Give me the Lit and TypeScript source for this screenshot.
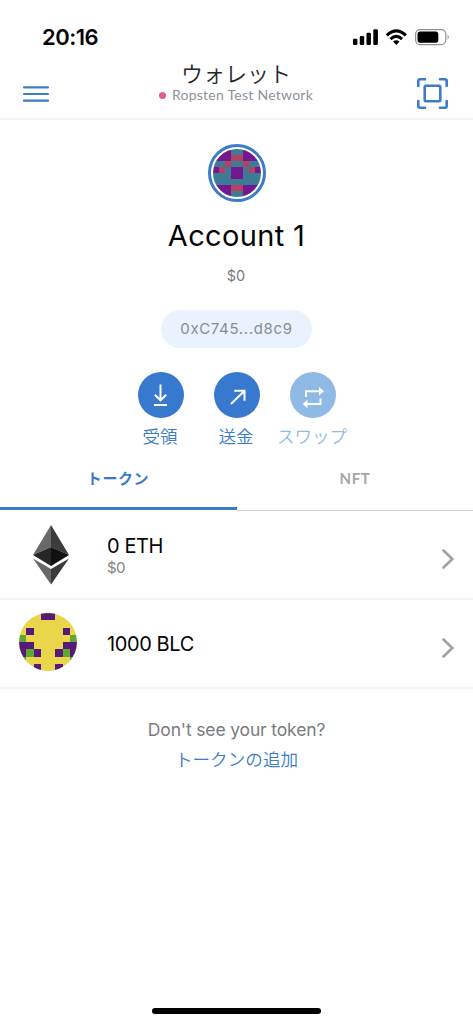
import { LitElement, html, css, svg } from "lit";
import { customElement, property } from "lit/decorators.js";

@customElement("block-avatar")
class BlockAvatar extends LitElement {
  @property({ type: Array }) rows: string[] = [];
  @property({ type: Object }) palette: Record<string, string> = {};
  static styles = css`
    :host { display: block; border-radius: 50%; overflow: hidden; }
    .grid { display: block; width: 100%; height: 100%; }
  `;
  render() {
    return html`<svg class="grid" viewBox="0 0 8 8" shape-rendering="crispEdges">
      ${this.rows.map((row, y) =>
        [...row].map((c, x) => svg`<rect x=${x} y=${y} width="1.02" height="1.02" fill=${this.palette[c]}></rect>`)
      )}
    </svg>`;
  }
}

@customElement("app-root")
class AppRoot extends LitElement {
  static styles = css`
    * { box-sizing: border-box; }
    :host {
      display: flex; flex-direction: column; width: 473px; height: 1024px; overflow: hidden;
      background: #fff; color: #050505;
      font-family: Inter, "Noto Sans CJK JP", sans-serif;
      -webkit-font-smoothing: antialiased;
    }
    svg { display: block; }
    .status { height: 58px; flex: none; display: flex; justify-content: space-between; padding: 25px 23px 0 42px; }
    .clock { font-size: 22px; line-height: 25px; font-weight: 600; letter-spacing: -0.5px; white-space: nowrap; }
    .indicators { display: flex; height: 24px; }
    .header { height: 62px; flex: none; display: flex; justify-content: space-between; border-bottom: 2px solid #f4f5f6; padding: 0 24px 0 22px; }
    .menu { margin-top: 27px; }
    .scan { margin-top: 19px; }
    .heading { display: flex; flex-direction: column; align-items: center; padding-top: 2px; margin-left: 6px; }
    .title { font-size: 22px; line-height: 25px; color: #24272a; font-family: "Noto Sans CJK JP", sans-serif; white-space: nowrap; font-weight: 350; }
    .network { margin-top: 1px; display: flex; align-items: center; gap: 6px; font: 14px/18px Lato, sans-serif; letter-spacing: 0.26px; color: #8b929b; white-space: nowrap; }
    .dot { width: 7px; height: 7px; border-radius: 50%; background: #e05c91; }
    .account { height: 329px; flex: none; display: flex; flex-direction: column; align-items: center; padding-top: 24px; }
    .ring { width: 58px; height: 58px; border: 3px solid #3a7bca; border-radius: 50%; padding: 2px; }
    .name { margin-top: 15px; font-size: 29px; line-height: 38px; letter-spacing: 0.35px; white-space: nowrap; }
    .fiat { margin-top: 11px; font-size: 14.5px; line-height: 20px; color: #777b80; padding-right: 1px; }
    .address { margin-top: 24px; width: 151px; height: 38px; border-radius: 19px; background: #eaf3fd; color: #858d97; font-size: 15px; line-height: 38px; text-align: center; letter-spacing: 0.65px; white-space: nowrap; }
    .actions { display: flex; margin-top: 24px; }
    .action { width: 76px; display: flex; flex-direction: column; align-items: center; color: #397bc8; }
    .disc { width: 46px; height: 46px; border-radius: 50%; background: #3779ce; }
    .label { margin-top: 6px; padding-right: 1px; font: 350 17.5px/24px "Noto Sans CJK JP", sans-serif; white-space: nowrap; }
    .faded { color: #91bce6; }
    .faded .disc { background: #8ebae5; }
    .tabs { height: 62px; flex: none; display: flex; }
    .tab { flex: 1; border-bottom: 1px solid #ccced0; text-align: center; font: 700 15px/24px Lato, "Noto Sans CJK JP", sans-serif; color: #a5a8ab; padding-top: 17px; letter-spacing: 0.6px; }
    .active { color: #3b7bc8; border-bottom: 3px solid #3c7bcb; margin-bottom: 1px; padding-right: 1px; }
    .token { height: 89px; flex: none; display: flex; align-items: center; border-bottom: 2px solid #f4f5f6; padding: 0 18px; }
    .icon { width: 60px; flex: none; display: flex; justify-content: center; }
    .eth { margin-left: 6px; }
    .texts { flex: 1; margin-left: 29px; }
    .pair { padding-top: 2px; }
    .amount { font-size: 20px; line-height: 24px; letter-spacing: -0.4px; white-space: nowrap; }
    .value { font-size: 15px; line-height: 20px; color: #818488; letter-spacing: -0.5px; }
    .chevron { margin-top: 9px; }
    .avatar { width: 48px; height: 48px; }
    .blc { width: 58px; height: 58px; margin-top: -3px; }
    .footer { display: flex; flex-direction: column; align-items: center; padding-top: 29px; }
    .hint { font-size: 17.5px; line-height: 24px; color: #787c82; letter-spacing: -0.15px; white-space: nowrap; }
    .add { margin-top: 5px; font: 350 17.6px/24px "Noto Sans CJK JP", sans-serif; color: #3b7bc8; white-space: nowrap; }
    .home { margin: auto auto 10px; width: 169px; height: 6px; border-radius: 3px; background: #000; }
  `;

  chevron() {
    return html`<svg class="chevron" width="14" height="22" viewBox="0 0 14 22"><path d="M2.5 2.5 L11.3 11 L2.5 19.5" fill="none" stroke="#a2a3a5" stroke-width="2.7" stroke-linecap="round"/></svg>`;
  }

  render() {
    return html`
      <div class="status">
        <div class="clock">20:16</div>
        <div class="indicators">
          <svg width="98" height="24" viewBox="352 25 98 24">
            <rect x="353" y="38.7" width="4.4" height="6.2" rx="1.2"/><rect x="359.8" y="36" width="4.4" height="8.9" rx="1.2"/>
            <rect x="366.5" y="32.7" width="4.4" height="12.2" rx="1.2"/><rect x="373.3" y="29.2" width="4.6" height="15.7" rx="1.2"/>
            <g fill="none" stroke="#000" stroke-width="3"><path d="M386.8 35.4 Q396.3 26.2 405.8 35.4"/><path d="M390.5 39.1 Q396.3 33.6 402.1 39.1"/></g>
            <path d="M393 41.5 Q396.3 38.8 399.6 41.5 L396.3 45z"/>
            <rect x="415.6" y="29.6" width="30.2" height="15" rx="4.5" fill="none" stroke="#929292" stroke-width="1.2"/>
            <rect x="417.5" y="31.5" width="20.8" height="11.2" rx="2.7"/>
            <path d="M447.6 34.5 Q450 37.1 447.6 39.7z" fill="#929292"/>
          </svg>
        </div>
      </div>
      <div class="header">
        <svg class="menu" width="28" height="18" viewBox="0 0 28 18"><path d="M2 2.3H26M2 9H26M2 15.7H26" stroke="#3d7cc8" stroke-width="2.2" stroke-linecap="round"/></svg>
        <div class="heading">
          <div class="title">ウォレット</div>
          <div class="network"><span class="dot"></span><span>Ropsten Test Network</span></div>
        </div>
        <svg class="scan" width="33" height="33" viewBox="0 0 33 33"><g fill="none" stroke="#3d7cc8" stroke-width="2.6" stroke-linecap="round"><path d="M2.3 9V4Q2.3 2.3 4 2.3H9M24 2.3H29Q30.7 2.3 30.7 4V9M30.7 24V29Q30.7 30.7 29 30.7H24M9 30.7H4Q2.3 30.7 2.3 29V24"/><rect x="8.7" y="8.7" width="15.6" height="15.6" rx="1.2"/></g></svg>
      </div>
      <div class="account">
        <div class="ring"><block-avatar class="avatar"
          .rows=${["PPPTTPPP", "PPPRRPPP", "TTRTTRTT", "PRTPPTRP", "TTTPPTTT", "TTTTTTTT", "PPPRRPPP", "PPPTTPPP"]}
          .palette=${{ P: "#74188f", T: "#3d7a95", R: "#b5405f" }}></block-avatar></div>
        <div class="name">Account 1</div>
        <div class="fiat">$0</div>
        <div class="address">0xC745...d8c9</div>
        <div class="actions">
          <div class="action"><svg class="disc" viewBox="0 0 46 46"><path d="M22.5 12.5V28M16.8 22.7L22.5 28.3L28.2 22.7M16 33H29" fill="none" stroke="#fff" stroke-width="2"/></svg><div class="label">受領</div></div>
          <div class="action"><svg class="disc" viewBox="0 0 46 46"><path d="M17 32L30.5 18.7M20.3 18.7H30.5V28.7" fill="none" stroke="#fff" stroke-width="2"/></svg><div class="label">送金</div></div>
          <div class="action faded"><svg class="disc" viewBox="0 0 46 46"><path d="M16 25V19.3H30M30.5 26.5V32H16" fill="none" stroke="#fff" stroke-width="2"/><path d="M29 15L34 19.3L29 23.6zM17.5 27.7L12.7 32L17.5 36.3z" fill="#fff"/></svg><div class="label">スワップ</div></div>
        </div>
      </div>
      <div class="tabs"><div class="tab active">トークン</div><div class="tab">NFT</div></div>
      <div class="token">
        <div class="icon"><svg class="eth" width="38" height="60" viewBox="0 0 38 60">
          <path d="M19 0L1 30L19 22z" fill="#696969"/><path d="M19 0L37 30L19 22z" fill="#3b3b3b"/>
          <path d="M1 30L19 22V41z" fill="#272727"/><path d="M37 30L19 22V41z" fill="#111"/>
          <path d="M1 33.5L19 44V59.5z" fill="#696969"/><path d="M37 33.5L19 44V59.5z" fill="#3b3b3b"/></svg></div>
        <div class="texts pair"><div class="amount">0 ETH</div><div class="value">$0</div></div>
        ${this.chevron()}
      </div>
      <div class="token">
        <div class="icon"><block-avatar class="blc"
          .rows=${["YYYPPYYY", "YYYYYYYY", "YPYYYYPY", "GYYYYYYG", "PPYYYYPP", "PGPYYPGP", "GYYYYYYG", "YYPYYPYY"]}
          .palette=${{ Y: "#ead64a", P: "#561a79", G: "#61a637" }}></block-avatar></div>
        <div class="texts"><div class="amount">1000 BLC</div></div>
        ${this.chevron()}
      </div>
      <div class="footer"><div class="hint">Don't see your token?</div><div class="add">トークンの追加</div></div>
      <div class="home"></div>
    `;
  }
}
